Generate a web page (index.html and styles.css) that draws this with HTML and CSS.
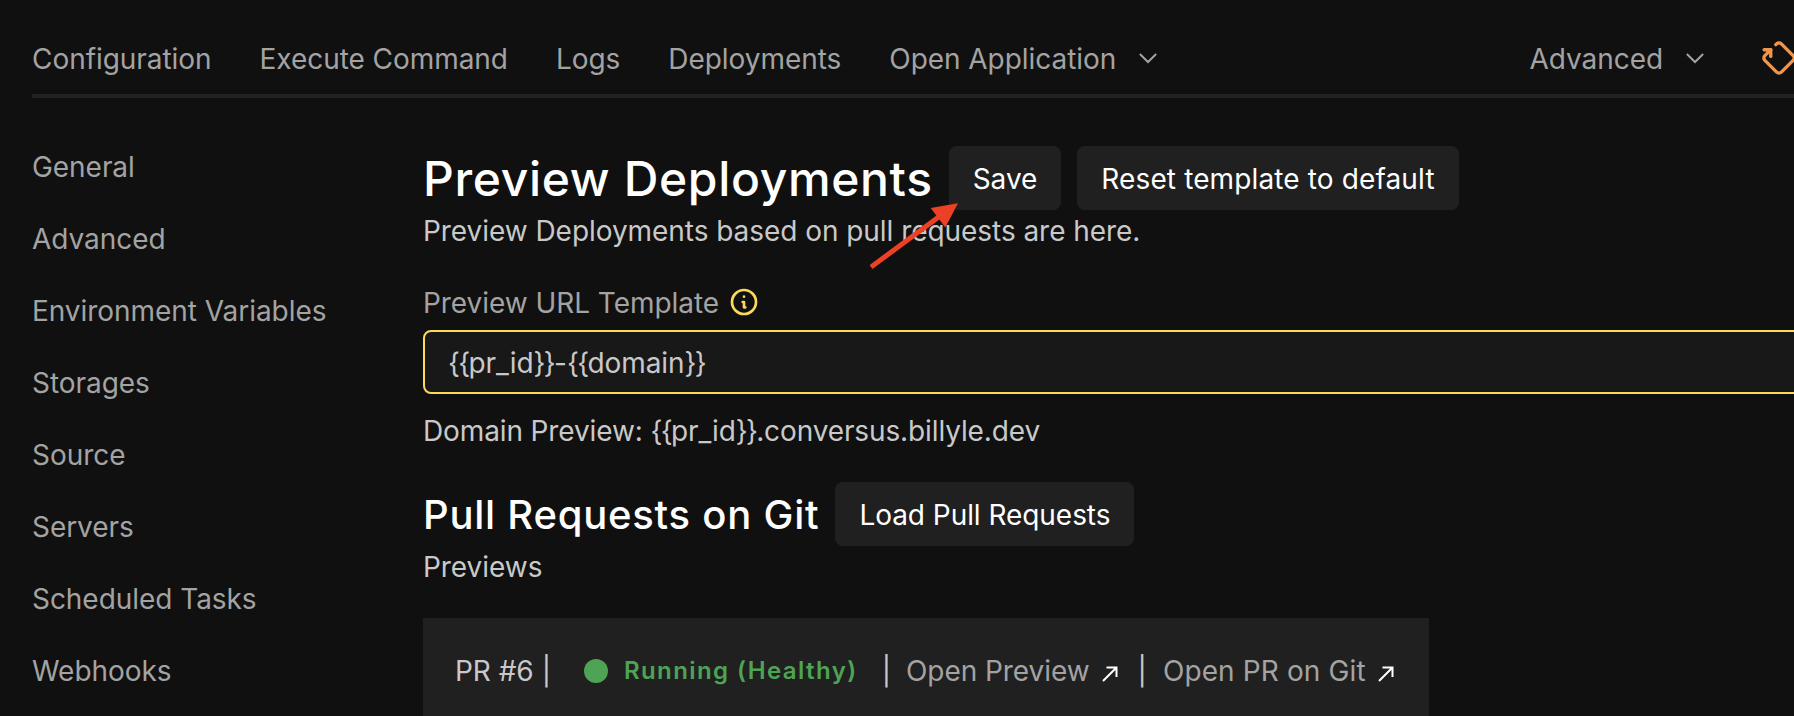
FILE: index.html
```html
<!DOCTYPE html>
<html lang="en">
<head>
<meta charset="utf-8">
<title>Preview Deployments</title>
<link rel="stylesheet" href="styles.css">
</head>
<body>
<nav class="topbar">
  <a class="topbar-link">Configuration</a>
  <a class="topbar-link">Execute Command</a>
  <a class="topbar-link">Logs</a>
  <a class="topbar-link">Deployments</a>
  <a class="topbar-link">Open Application
    <svg class="chevron" viewBox="0 0 24 24"><path d="M19.5 8.25l-7.5 7.5-7.5-7.5"/></svg></a>
  <div class="topbar-end">
    <a class="topbar-link">Advanced
      <svg class="chevron" viewBox="0 0 24 24"><path d="M19.5 8.25l-7.5 7.5-7.5-7.5"/></svg></a>
    <svg class="redeploy" viewBox="0 0 24 24"><path d="M10.09 4.01l.496-.495a2 2 0 0 1 2.828 0l7.071 7.07a2 2 0 0 1 0 2.83l-7.07 7.07a2 2 0 0 1-2.83 0l-7.07-7.07a2 2 0 0 1 0-2.83l3.535-3.535h-3.988"/><path d="M7.05 11.038v-3.988"/></svg>
  </div>
</nav>
<div class="layout">
  <aside class="sidebar">
    <a>General</a>
    <a>Advanced</a>
    <a>Environment Variables</a>
    <a>Storages</a>
    <a>Source</a>
    <a>Servers</a>
    <a>Scheduled Tasks</a>
    <a>Webhooks</a>
  </aside>
  <main class="content">
    <div class="heading-row">
      <h1>Preview Deployments</h1>
      <button class="button">Save</button>
      <button class="button wide">Reset template to default</button>
      <svg class="pointer" viewBox="0 0 90 72"><path d="M1 64L70 13" stroke="#ed4126" stroke-width="5"/><path d="M88 .3L60.700 5L75.300 24.500Z" fill="#ed4126"/></svg>
    </div>
    <p class="subtitle">Preview Deployments based on pull requests are here.</p>
    <label class="field-label">Preview URL Template
      <svg class="info" viewBox="0 0 24 24"><path d="M13 16h-1v-4h-1m1-4h.01M21 12a9 9 0 1 1-18 0 9 9 0 0 1 18 0z"/></svg></label>
    <div class="field"><span class="brace">{{</span>pr_id<span class="brace">}}</span>-<span class="brace">{{</span>domain<span class="brace">}}</span></div>
    <p class="domain">Domain Preview: <span class="brace">{{</span>pr_id<span class="brace">}}</span>.conversus.billyle.dev</p>
    <div class="heading-row second">
      <h2>Pull Requests on Git</h2>
      <button class="button">Load Pull Requests</button>
    </div>
    <p class="subtitle">Previews</p>
    <section class="preview-card">
      <span>PR #6</span><span class="bar first">|</span>
      <span class="dot"></span><span class="status">Running (Healthy)</span>
      <span class="bar mid">|</span>
      <a>Open Preview</a><svg class="external" viewBox="0 0 16 16"><path d="M1 15L14.500 1.500M4.500 1.500H14.500V11"/></svg>
      <span class="bar last">|</span>
      <a class="git">Open PR on Git</a><svg class="external" viewBox="0 0 16 16"><path d="M1 15L14.500 1.500M4.500 1.500H14.500V11"/></svg>
    </section>
  </main>
</div>
</body>
</html>
```
FILE: styles.css
```css
* { box-sizing: border-box; }
body {
  margin: 0;
  height: 716px;
  overflow: hidden;
  background: #101010;
  color: #c9c9c9;
  font: 28px/40px Inter, sans-serif;
  letter-spacing: -0.05px;
  white-space: nowrap;
}
h1, h2, p { margin: 0; }
h1, h2 { color: #fff; font-weight: 500; }
.topbar {
  display: flex;
  align-items: center;
  gap: 48px;
  height: 98px;
  margin-left: 32px;
  padding-top: 24px;
  border-bottom: 4px solid #222;
  color: #a3a3a3;
}
.topbar-link { display: flex; align-items: center; gap: 19px; }
.chevron { width: 26px; height: 26px; margin-bottom: 2px; fill: none; stroke: currentColor; stroke-width: 1.8; }
.topbar-end { display: flex; align-items: center; margin-left: auto; gap: 51px; margin-right: -5px; }
.redeploy {
  width: 40px; height: 40px; margin-bottom: 2px; fill: none; stroke: #f0964a;
  stroke-width: 2; stroke-linecap: round; stroke-linejoin: round;
}
.layout { display: flex; padding: 48px 0 0 32px; }
.sidebar { display: flex; flex-direction: column; gap: 32px; width: 391px; flex: none; padding-top: 1px; color: #a3a3a3; }
.content { flex: 1; min-width: 0; }
.heading-row { position: relative; display: flex; align-items: center; gap: 16px; height: 64px; }
h1 { font-size: 48px; line-height: 62px; letter-spacing: 0.66px; padding-top: 2px; }
h2 { font-size: 40px; line-height: 56px; letter-spacing: 0.76px; padding-top: 2px; }
.button {
  height: 64px;
  padding: 2px 24px 0;
  border: 0;
  border-radius: 8px;
  background: #202020;
  color: #fff;
  font: inherit;
  letter-spacing: inherit;
}
.button.wide { letter-spacing: 0.13px; }
.pointer { position: absolute; left: 447px; top: 57px; width: 90px; height: 72px; fill: none; }
.subtitle { padding-top: 1px; }
.field-label { display: flex; align-items: center; gap: 9px; margin-top: 32px; color: #a3a3a3; }
.info {
  width: 32px; height: 32px; margin-bottom: 2px; fill: none; stroke: #fcd95b;
  stroke-width: 2; stroke-linecap: round; stroke-linejoin: round;
}
.field {
  height: 64px;
  margin: 7px -10px 0 0;
  padding: 11px 24px 9px 23px;
  border: 2px solid #fcd95b;
  border-radius: 8px;
  background: #181818;
}
.brace { letter-spacing: -1.7px; }
.domain { margin-top: 17px; letter-spacing: -0.12px; }
.second { margin-top: 31px; }
.preview-card {
  display: flex;
  align-items: center;
  width: 1006px;
  height: 106px;
  margin-top: 31px;
  padding: 0 32px;
  background: #202020;
}
.preview-card a { color: #a3a3a3; }
.preview-card .git { letter-spacing: 0.12px; }
.bar.first { margin-left: 8px; }
.dot { flex: none; width: 24px; height: 24px; margin: 0 16px 0 33px; border-radius: 50%; background: #4ea354; }
.status { color: #4ea354; font-size: 24px; font-weight: 600; letter-spacing: 1.42px; }
.bar.mid { margin: 0 15px 0 24px; }
.bar.last { margin: 0 16px 0 20px; }
.external { flex: none; width: 16px; height: 16px; margin: 5px 0 0 12px; fill: none; stroke: #fff; stroke-width: 2; }
```
